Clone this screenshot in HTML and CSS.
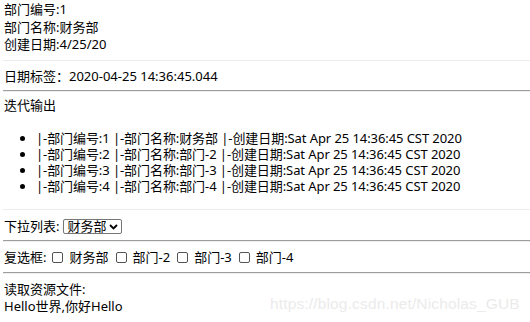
FILE: index.html
```html
<!DOCTYPE html>
<html lang="zh-CN">
<head>
<meta charset="utf-8">
<title>部门信息</title>
<link rel="stylesheet" href="styles.css">
</head>
<body>
<div class="page">
  <section class="block info">
    <div>部门编号:1</div>
    <div>部门名称:财务部</div>
    <div>创建日期:4/25/20</div>
  </section>
  <div class="sep-light"></div>
  <section class="block date">
    <div>日期标签：2020-04-25 14:36:45.044</div>
  </section>
  <hr class="sep">
  <section class="block iter">
    <div class="iter-title">迭代输出</div>
    <ul class="dept-list">
      <li>|-部门编号:1 |-部门名称:财务部 |-创建日期:Sat Apr 25 14:36:45 CST 2020</li>
      <li>|-部门编号:2 |-部门名称:部门-2 |-创建日期:Sat Apr 25 14:36:45 CST 2020</li>
      <li>|-部门编号:3 |-部门名称:部门-3 |-创建日期:Sat Apr 25 14:36:45 CST 2020</li>
      <li>|-部门编号:4 |-部门名称:部门-4 |-创建日期:Sat Apr 25 14:36:45 CST 2020</li>
    </ul>
  </section>
  <div class="sep-light"></div>
  <section class="block select-row">
    <label class="row-label" for="dept">下拉列表:</label>
    <span class="select-wrap">
      <select id="dept" class="select">
        <option>财务部</option>
        <option>部门-2</option>
        <option>部门-3</option>
        <option>部门-4</option>
      </select>
      <svg class="chev" width="9" height="6" viewBox="0 0 9 6"><path d="M1 1 L4.5 4.5 L8 1" fill="none" stroke="#000" stroke-width="1.8"/></svg>
    </span>
  </section>
  <hr class="sep">
  <section class="block check-row">
    <span class="row-label">复选框:</span>
    <label class="check"><input type="checkbox"><span>财务部</span></label>
    <label class="check"><input type="checkbox"><span>部门-2</span></label>
    <label class="check"><input type="checkbox"><span>部门-3</span></label>
    <label class="check"><input type="checkbox"><span>部门-4</span></label>
  </section>
  <hr class="sep">
  <section class="block res">
    <div>读取资源文件:</div>
    <div class="hello">Hello世界,你好Hello</div>
  </section>
  <div class="watermark">https://blog.csdn.net/Nicholas_GUB</div>
</div>
</body>
</html>
```

FILE: styles.css
```css
html, body {
  margin: 0;
  padding: 0;
  background: #fff;
}
body {
  font-family: "Noto Sans", "Noto Sans CJK SC", sans-serif;
  font-size: 13px;
  line-height: 17.5px;
  color: #000;
}
.page {
  position: relative;
  padding-left: 4px;
  height: 322px;
  overflow: hidden;
}
.block {
  padding-right: 4px;
}
.info {
  padding-top: 1px;
  padding-bottom: 6px;
}
.sep-light {
  border-top: 1px solid #ececec;
  margin-left: -1px;
}
.date {
  padding-top: 7px;
  padding-bottom: 5px;
}
.sep {
  margin: 0 0 0 -1px;
  border: 0;
  border-top: 1px solid #9d9d9d;
  border-bottom: 1px solid #eeeeee;
  height: 0;
}
.iter {
  padding-top: 5px;
  padding-bottom: 15px;
}
.dept-list {
  margin: 15px 0 0 0;
  padding-left: 32px;
  line-height: 16px;
  list-style: disc;
  letter-spacing: -0.08px;
}
.select-row {
  padding-top: 8px;
  padding-bottom: 5px;
  display: flex;
  align-items: center;
  height: 17.5px;
}
.row-label {
  margin-right: 4px;
}
.select-wrap {
  position: relative;
  display: inline-flex;
}
.select {
  appearance: none;
  -webkit-appearance: none;
  box-sizing: border-box;
  font: inherit;
  font-size: 13px;
  line-height: 13px;
  height: 15px;
  width: 59px;
  padding: 0 0 0 3px;
  margin: 0;
  border: 1px solid #767676;
  border-radius: 2px;
  background: #fff;
  color: #000;
}
.chev {
  position: absolute;
  right: 4px;
  top: 5px;
  pointer-events: none;
}
.check-row {
  padding-top: 7px;
  padding-bottom: 5px;
  display: flex;
  align-items: center;
  height: 17.5px;
}
.check-row .row-label {
  margin-right: 0;
}
.check {
  display: inline-flex;
  align-items: center;
}
.check input {
  appearance: none;
  -webkit-appearance: none;
  box-sizing: border-box;
  width: 11px;
  height: 11px;
  margin: 0 6px 0 6px;
  border: 1px solid #555;
  border-radius: 2px;
  background: #fff;
}
.check + .check input {
  margin-left: 7px;
}
.res {
  padding-top: 7px;
}
.hello {
  line-height: 17px;
}
.watermark {
  position: absolute;
  left: 270px;
  top: 295px;
  font-family: "Liberation Sans", sans-serif;
  font-size: 15.5px;
  line-height: 18px;
  color: #ebebeb;
  letter-spacing: 0.15px;
  white-space: nowrap;
}
```
